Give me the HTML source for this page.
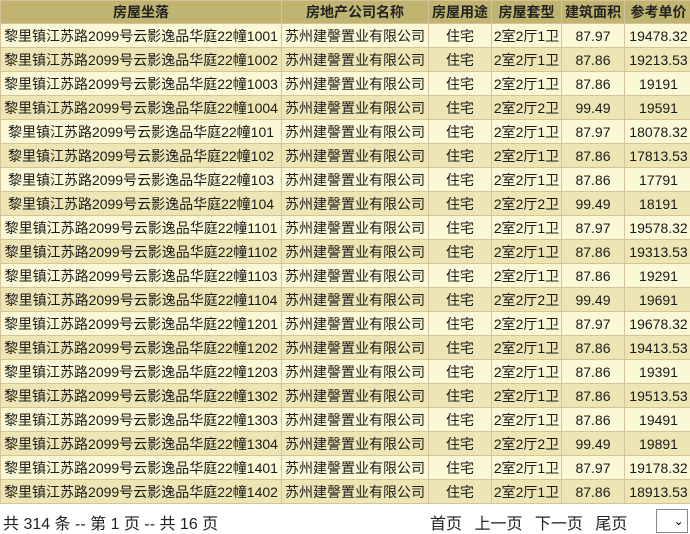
<!DOCTYPE html>
<html><head><meta charset="utf-8"><style>
body{margin:0;width:690px;height:534px;overflow:hidden;background:#fff;font-family:"Liberation Sans","Noto Sans CJK SC",sans-serif;}
table{border-collapse:collapse;position:absolute;left:0;top:0;width:692px;table-layout:fixed}
td,th{border:1px solid #d6c39a;height:23px;padding:0;font-size:14px;color:#1a1a1a;text-align:center;white-space:nowrap;overflow:hidden}
th{background:#c0b570;font-weight:bold;color:#222;height:22px}
tr:nth-child(even) td{background:#fbf8d6}
tr:nth-child(odd) td{background:#eee5b5}
.foot{position:absolute;top:510px;left:3px;font-size:16px;color:#222}
.nav{position:absolute;top:510px;left:430px;font-size:16px;color:#222;word-spacing:8px}
.sel{position:absolute;top:509px;left:656px;width:30px;height:22px;border:1px solid #888;background:#fff;font-size:12px;text-align:right;line-height:22px}
</style></head><body>
<table>
<colgroup><col style="width:281px"><col style="width:147px"><col style="width:63px"><col style="width:70px"><col style="width:63px"><col style="width:68px"></colgroup>
<tr><th>房屋坐落</th><th>房地产公司名称</th><th>房屋用途</th><th>房屋套型</th><th>建筑面积</th><th>参考单价</th></tr>
<tr><td>黎里镇江苏路2099号云影逸品华庭22幢1001</td><td>苏州建謦置业有限公司</td><td>住宅</td><td>2室2厅1卫</td><td>87.97</td><td>19478.32</td></tr>
<tr><td>黎里镇江苏路2099号云影逸品华庭22幢1002</td><td>苏州建謦置业有限公司</td><td>住宅</td><td>2室2厅1卫</td><td>87.86</td><td>19213.53</td></tr>
<tr><td>黎里镇江苏路2099号云影逸品华庭22幢1003</td><td>苏州建謦置业有限公司</td><td>住宅</td><td>2室2厅1卫</td><td>87.86</td><td>19191</td></tr>
<tr><td>黎里镇江苏路2099号云影逸品华庭22幢1004</td><td>苏州建謦置业有限公司</td><td>住宅</td><td>2室2厅2卫</td><td>99.49</td><td>19591</td></tr>
<tr><td>黎里镇江苏路2099号云影逸品华庭22幢101</td><td>苏州建謦置业有限公司</td><td>住宅</td><td>2室2厅1卫</td><td>87.97</td><td>18078.32</td></tr>
<tr><td>黎里镇江苏路2099号云影逸品华庭22幢102</td><td>苏州建謦置业有限公司</td><td>住宅</td><td>2室2厅1卫</td><td>87.86</td><td>17813.53</td></tr>
<tr><td>黎里镇江苏路2099号云影逸品华庭22幢103</td><td>苏州建謦置业有限公司</td><td>住宅</td><td>2室2厅1卫</td><td>87.86</td><td>17791</td></tr>
<tr><td>黎里镇江苏路2099号云影逸品华庭22幢104</td><td>苏州建謦置业有限公司</td><td>住宅</td><td>2室2厅2卫</td><td>99.49</td><td>18191</td></tr>
<tr><td>黎里镇江苏路2099号云影逸品华庭22幢1101</td><td>苏州建謦置业有限公司</td><td>住宅</td><td>2室2厅1卫</td><td>87.97</td><td>19578.32</td></tr>
<tr><td>黎里镇江苏路2099号云影逸品华庭22幢1102</td><td>苏州建謦置业有限公司</td><td>住宅</td><td>2室2厅1卫</td><td>87.86</td><td>19313.53</td></tr>
<tr><td>黎里镇江苏路2099号云影逸品华庭22幢1103</td><td>苏州建謦置业有限公司</td><td>住宅</td><td>2室2厅1卫</td><td>87.86</td><td>19291</td></tr>
<tr><td>黎里镇江苏路2099号云影逸品华庭22幢1104</td><td>苏州建謦置业有限公司</td><td>住宅</td><td>2室2厅2卫</td><td>99.49</td><td>19691</td></tr>
<tr><td>黎里镇江苏路2099号云影逸品华庭22幢1201</td><td>苏州建謦置业有限公司</td><td>住宅</td><td>2室2厅1卫</td><td>87.97</td><td>19678.32</td></tr>
<tr><td>黎里镇江苏路2099号云影逸品华庭22幢1202</td><td>苏州建謦置业有限公司</td><td>住宅</td><td>2室2厅1卫</td><td>87.86</td><td>19413.53</td></tr>
<tr><td>黎里镇江苏路2099号云影逸品华庭22幢1203</td><td>苏州建謦置业有限公司</td><td>住宅</td><td>2室2厅1卫</td><td>87.86</td><td>19391</td></tr>
<tr><td>黎里镇江苏路2099号云影逸品华庭22幢1302</td><td>苏州建謦置业有限公司</td><td>住宅</td><td>2室2厅1卫</td><td>87.86</td><td>19513.53</td></tr>
<tr><td>黎里镇江苏路2099号云影逸品华庭22幢1303</td><td>苏州建謦置业有限公司</td><td>住宅</td><td>2室2厅1卫</td><td>87.86</td><td>19491</td></tr>
<tr><td>黎里镇江苏路2099号云影逸品华庭22幢1304</td><td>苏州建謦置业有限公司</td><td>住宅</td><td>2室2厅2卫</td><td>99.49</td><td>19891</td></tr>
<tr><td>黎里镇江苏路2099号云影逸品华庭22幢1401</td><td>苏州建謦置业有限公司</td><td>住宅</td><td>2室2厅1卫</td><td>87.97</td><td>19178.32</td></tr>
<tr><td>黎里镇江苏路2099号云影逸品华庭22幢1402</td><td>苏州建謦置业有限公司</td><td>住宅</td><td>2室2厅1卫</td><td>87.86</td><td>18913.53</td></tr>
</table>
<div class="foot">共 314 条 -- 第 1 页 -- 共 16 页</div>
<div class="nav">首页 上一页 下一页 尾页</div>
<div class="sel">&#8964;&nbsp;</div>
</body></html>
